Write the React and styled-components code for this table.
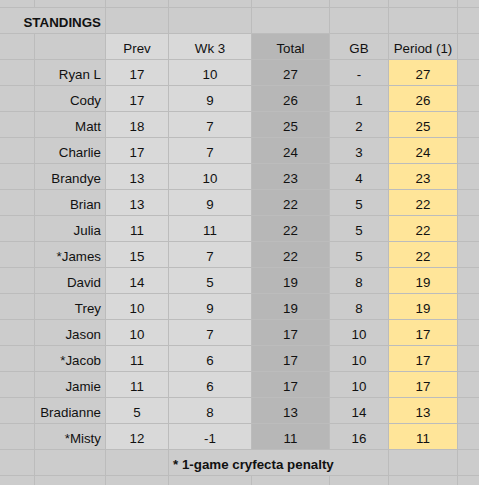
import React from 'react';
import styled, { createGlobalStyle } from 'styled-components';

const GlobalStyle = createGlobalStyle`
  html, body {
    margin: 0;
    padding: 0;
    background: #cccccc;
  }
`;

const tones = {
  base: '#cccccc',
  light: '#d9d9d9',
  dark: '#b7b7b7',
  gold: '#ffe599',
};

const Sheet = styled.div`
  display: grid;
  grid-template-columns: 34px 70px 62px 82px 77px 58px 68px 1fr;
  grid-template-rows: 7px repeat(18, 25px) 9px;
  gap: 1px;
  width: 479px;
  height: 485px;
  overflow: hidden;
  background: #bcbcbc;
  font-family: 'Liberation Sans', Arial, sans-serif;
  font-size: 13.33px;
  color: #111;
`;

const Cell = styled.div`
  display: flex;
  align-items: flex-end;
  justify-content: ${({ $align }) =>
    $align === 'right' ? 'flex-end' : $align === 'left' ? 'flex-start' : 'center'};
  padding: 0 4px 3px 4px;
  background: ${({ $tone }) => tones[$tone || 'base']};
  font-weight: ${({ $bold }) => ($bold ? 700 : 400)};
  grid-column: ${({ $span }) => ($span ? `span ${$span}` : 'auto')};
  white-space: nowrap;
  line-height: 15px;
`;

const rows = [
  ['Ryan L', 17, 10, 27, '-', 27],
  ['Cody', 17, 9, 26, 1, 26],
  ['Matt', 18, 7, 25, 2, 25],
  ['Charlie', 17, 7, 24, 3, 24],
  ['Brandye', 13, 10, 23, 4, 23],
  ['Brian', 13, 9, 22, 5, 22],
  ['Julia', 11, 11, 22, 5, 22],
  ['*James', 15, 7, 22, 5, 22],
  ['David', 14, 5, 19, 8, 19],
  ['Trey', 10, 9, 19, 8, 19],
  ['Jason', 10, 7, 17, 10, 17],
  ['*Jacob', 11, 6, 17, 10, 17],
  ['Jamie', 11, 6, 17, 10, 17],
  ['Bradianne', 5, 8, 13, 14, 13],
  ['*Misty', 12, -1, 11, 16, 11],
];

const EmptyRow = () => (
  <>
    {Array.from({ length: 8 }).map((_, i) => (
      <Cell key={i} />
    ))}
  </>
);

export default function App() {
  return (
    <>
      <GlobalStyle />
      <Sheet>
        <EmptyRow />

        <Cell $span={2} $align="right" $bold>
          STANDINGS
        </Cell>
        <Cell />
        <Cell />
        <Cell />
        <Cell />
        <Cell />
        <Cell />

        <Cell />
        <Cell />
        <Cell $tone="light">Prev</Cell>
        <Cell $tone="light">Wk 3</Cell>
        <Cell $tone="dark">Total</Cell>
        <Cell>GB</Cell>
        <Cell>Period (1)</Cell>
        <Cell />

        {rows.map(([name, prev, wk, total, gb, period]) => (
          <React.Fragment key={name}>
            <Cell />
            <Cell $align="right">{name}</Cell>
            <Cell $tone="light">{prev}</Cell>
            <Cell $tone="light">{wk}</Cell>
            <Cell $tone="dark">{total}</Cell>
            <Cell>{gb}</Cell>
            <Cell $tone="gold">{period}</Cell>
            <Cell />
          </React.Fragment>
        ))}

        <Cell />
        <Cell />
        <Cell />
        <Cell $span={3} $align="left" $bold>
          * 1-game cryfecta penalty
        </Cell>
        <Cell />
        <Cell />

        <EmptyRow />
      </Sheet>
    </>
  );
}
